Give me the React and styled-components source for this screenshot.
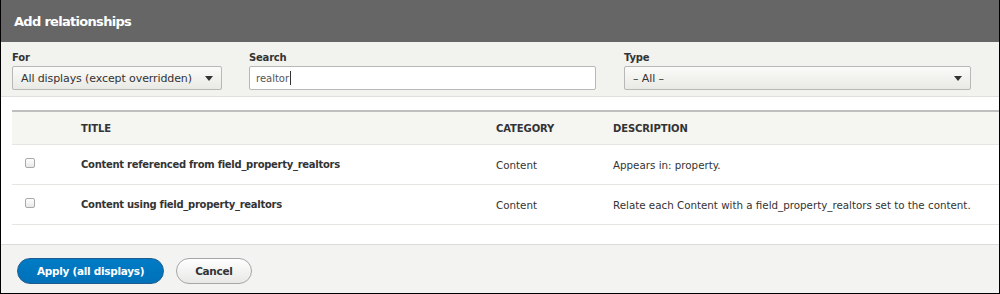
import React from "react"
import styled, { createGlobalStyle } from "styled-components"

const GlobalStyle = createGlobalStyle`
  html, body {
    margin: 0;
    padding: 0;
    background: #fff;
  }
  body {
    font-family: "DejaVu Sans", "Liberation Sans", sans-serif;
    color: #333;
  }
`

const font = `"DejaVu Sans", "Liberation Sans", sans-serif`

const Dialog = styled.div`
  box-sizing: border-box;
  width: 1000px;
  height: 294px;
  border: 1px solid #000;
  border-top: none;
  display: flex;
  flex-direction: column;
  overflow: hidden;
  background: #fff;
`

const TitleBar = styled.div`
  height: 42px;
  flex: none;
  background: #666666;
  display: flex;
  align-items: center;
  padding: 0 13px;
`

const Title = styled.h1`
  margin: 0;
  font-family: ${font};
  font-size: 13px;
  font-weight: bold;
  color: #fff;
  letter-spacing: -0.7px;
`

const Filters = styled.div`
  flex: none;
  height: 55px;
  box-sizing: border-box;
  background: #f2f2ee;
  border-bottom: 1px solid #e0dfdb;
  display: flex;
  padding: 9px 0 0 11px;
`

const Field = styled.div`
  width: ${(p) => p.width}px;
  margin-right: ${(p) => p.gap || 0}px;
  display: flex;
  flex-direction: column;
`

const Label = styled.label`
  font-family: ${font};
  font-size: 10px;
  font-weight: bold;
  color: #333;
  height: 15px;
  line-height: 14px;
  letter-spacing: -0.2px;
`

const Select = styled.div`
  box-sizing: border-box;
  height: 24px;
  border: 1px solid #b8b8b8;
  border-radius: 2px;
  background: linear-gradient(#fbfbf9, #e9e9e5);
  display: flex;
  align-items: center;
  justify-content: space-between;
  padding: 0 8px 0 8px;
  font-family: ${font};
  font-size: 11px;
  color: #333;
  letter-spacing: -0.1px;
`

const Arrow = styled.span`
  width: 0;
  height: 0;
  border-left: 4px solid transparent;
  border-right: 4px solid transparent;
  border-top: 5px solid #333;
  margin-top: 1px;
`

const SearchBox = styled.div`
  box-sizing: border-box;
  height: 24px;
  border: 1px solid #b8b8b8;
  border-radius: 2px;
  background: #fff;
  display: flex;
  align-items: center;
  padding: 0 6px;
  font-family: ${font};
  font-size: 10px;
  color: #555;
`

const Caret = styled.span`
  display: inline-block;
  width: 1px;
  height: 14px;
  background: #333;
  margin-left: 1px;
`

const Body = styled.div`
  flex: 1;
  padding: 13px 0 0 11px;
  border-bottom: 1px solid #dcdbd7;
`

const Table = styled.div`
  width: 989px;
  border-top: 2px solid #bfbfbf;
`

const Row = styled.div`
  display: grid;
  grid-template-columns: 69px 415px 117px 1fr;
  align-items: center;
  height: ${(p) => (p.head ? 32 : 39)}px;
  background: ${(p) => (p.head ? "#f5f5f2" : "#fff")};
  border-bottom: 1px solid #e6e5e1;
`

const Head = styled.div`
  font-family: ${font};
  font-size: 10px;
  font-weight: bold;
  color: #333;
  letter-spacing: -0.1px;
`

const Cell = styled.div`
  font-family: ${font};
  font-size: ${(p) => (p.bold ? 10 : 10.3)}px;
  font-weight: ${(p) => (p.bold ? "bold" : "normal")};
  color: #333;
  letter-spacing: ${(p) => (p.bold ? "-0.28px" : "0")};
  white-space: nowrap;
`

const Check = styled.span`
  display: block;
  box-sizing: border-box;
  width: 10px;
  height: 10px;
  margin-left: 13px;
  margin-top: -4px;
  border: 1px solid #a9a9a9;
  border-radius: 2px;
  background: linear-gradient(#fff, #e8e8e8);
`

const Footer = styled.div`
  flex: none;
  height: 48px;
  background: #f3f3f1;
  display: flex;
  align-items: center;
  padding: 0 0 0 16px;
  gap: 12px;
`

const Button = styled.button`
  box-sizing: border-box;
  height: 26px;
  padding: 0 ${(p) => (p.primary ? 19 : 18)}px;
  border-radius: 20px;
  border: 1px solid ${(p) => (p.primary ? "#1e5c90" : "#a6a6a6")};
  background: ${(p) =>
    p.primary
      ? "linear-gradient(#007bc6, #0071b8)"
      : "linear-gradient(#fefefe, #e8e8e6)"};
  color: ${(p) => (p.primary ? "#fff" : "#333")};
  font-family: ${font};
  font-size: 10.5px;
  font-weight: bold;
  letter-spacing: -0.3px;
  margin-top: 4px;
`

const rows = [
  {
    title: "Content referenced from field_property_realtors",
    category: "Content",
    description: "Appears in: property.",
  },
  {
    title: "Content using field_property_realtors",
    category: "Content",
    description:
      "Relate each Content with a field_property_realtors set to the content.",
  },
]

const App = () => {
  return (
    <>
      <GlobalStyle />
      <Dialog>
        <TitleBar>
          <Title>Add relationships</Title>
        </TitleBar>
        <Filters>
          <Field width={210} gap={27}>
            <Label>For</Label>
            <Select>
              All displays (except overridden)
              <Arrow />
            </Select>
          </Field>
          <Field width={347} gap={28}>
            <Label>Search</Label>
            <SearchBox>
              realtor
              <Caret />
            </SearchBox>
          </Field>
          <Field width={347}>
            <Label>Type</Label>
            <Select>
              – All –
              <Arrow />
            </Select>
          </Field>
        </Filters>
        <Body>
          <Table>
            <Row head>
              <span />
              <Head>TITLE</Head>
              <Head>CATEGORY</Head>
              <Head>DESCRIPTION</Head>
            </Row>
            {rows.map((r) => (
              <Row key={r.title}>
                <Check />
                <Cell bold>{r.title}</Cell>
                <Cell>{r.category}</Cell>
                <Cell>{r.description}</Cell>
              </Row>
            ))}
          </Table>
        </Body>
        <Footer>
          <Button primary>Apply (all displays)</Button>
          <Button>Cancel</Button>
        </Footer>
      </Dialog>
    </>
  )
}

export default App
